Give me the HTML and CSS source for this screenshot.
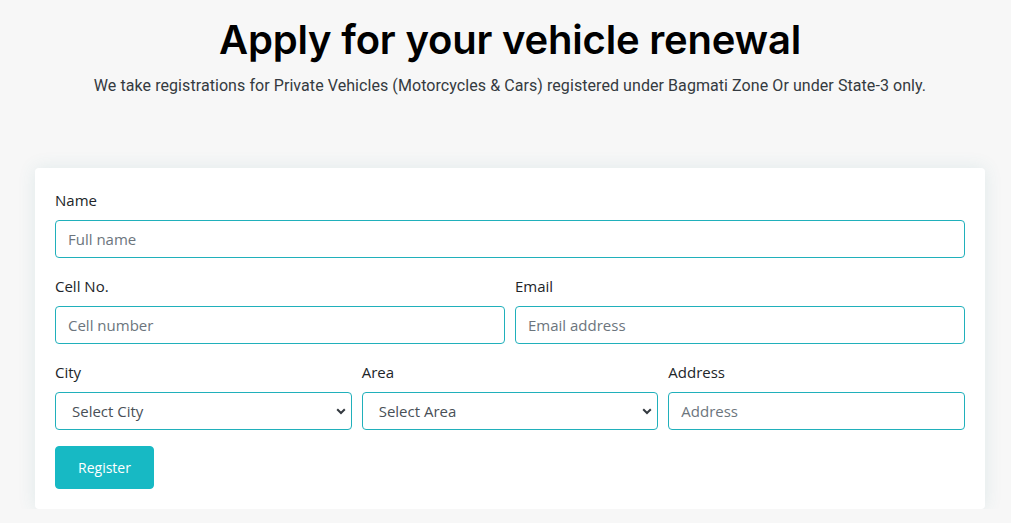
FILE: index.html
```html
<!DOCTYPE html>
<html lang="en">
<head>
<meta charset="utf-8">
<title>Apply for your vehicle renewal</title>
<link rel="stylesheet" href="styles.css">
</head>
<body>
<header class="hero">
  <h1 class="title">Apply for your vehicle renewal</h1>
  <p class="subtitle">We take registrations for Private Vehicles (Motorcycles &amp; Cars) registered under Bagmati Zone Or under State-3 only.</p>
</header>
<main class="card">
  <form class="form">
    <div class="row">
      <div class="field">
        <label class="label" for="name">Name</label>
        <input class="input" id="name" type="text" placeholder="Full name">
      </div>
    </div>
    <div class="row cols-2">
      <div class="field">
        <label class="label" for="cell">Cell No.</label>
        <input class="input" id="cell" type="text" placeholder="Cell number">
      </div>
      <div class="field">
        <label class="label" for="email">Email</label>
        <input class="input" id="email" type="text" placeholder="Email address">
      </div>
    </div>
    <div class="row cols-3">
      <div class="field">
        <label class="label" for="city">City</label>
        <div class="select-wrap">
          <select class="input select" id="city"><option>Select City</option></select>
          <svg class="chev" width="10" height="7" viewBox="0 0 10 7"><path d="M1.2 1.2 L5 5 L8.8 1.2" fill="none" stroke="#343a40" stroke-width="2"/></svg>
        </div>
      </div>
      <div class="field">
        <label class="label" for="area">Area</label>
        <div class="select-wrap">
          <select class="input select" id="area"><option>Select Area</option></select>
          <svg class="chev" width="10" height="7" viewBox="0 0 10 7"><path d="M1.2 1.2 L5 5 L8.8 1.2" fill="none" stroke="#343a40" stroke-width="2"/></svg>
        </div>
      </div>
      <div class="field">
        <label class="label" for="address">Address</label>
        <input class="input" id="address" type="text" placeholder="Address">
      </div>
    </div>
    <div class="actions">
      <button class="btn" type="button">Register</button>
    </div>
  </form>
</main>
</body>
</html>
```

FILE: styles.css
```css
* { box-sizing: border-box; }
html, body { margin: 0; padding: 0; }
body {
  background: #f7f7f7;
  font-family: "Open Sans", "Noto Sans", sans-serif;
  color: #212529;
  padding: 0 35px;
}
.hero {
  text-align: center;
  padding-top: 16px;
  padding-left: 9px;
  height: 168px;
}
.title {
  margin: 0;
  font-family: "Inter", "Lato", sans-serif;
  font-weight: 600;
  font-size: 40px;
  line-height: 48px;
  color: #000;
  letter-spacing: -0.2px;
}
.subtitle {
  margin: 10px 0 0;
  font-family: "Roboto", "Open Sans", sans-serif;
  font-size: 16px;
  line-height: 24px;
  color: #343a40;
  letter-spacing: 0.07px;
}
.card {
  background: #fff;
  border-radius: 4px;
  box-shadow: 0 0 18px rgba(60, 140, 150, 0.12);
  padding: 20px;
  width: 950px;
}
.form { display: flex; flex-direction: column; gap: 16px; }
.row { display: grid; grid-template-columns: 1fr; gap: 10px; }
.row.cols-2 { grid-template-columns: 1fr 1fr; }
.row.cols-3 { grid-template-columns: 1fr 1fr 1fr; }
.field { display: flex; flex-direction: column; }
.label {
  font-size: 15px;
  line-height: 24px;
  margin-bottom: 8px;
  color: #212529;
}
.input {
  height: 38px;
  width: 100%;
  border: 1px solid #20b0bb;
  border-radius: 4px;
  padding: 0 12px;
  font-family: "Open Sans", "Noto Sans", sans-serif;
  font-size: 15px;
  color: #495057;
  background: #fff;
  outline: none;
}
.input::placeholder { color: #6c757d; opacity: 1; }
.select-wrap { position: relative; }
.select {
  appearance: none;
  -webkit-appearance: none;
  padding-left: 16px;
  color: #495057;
}
.chev { position: absolute; right: 6px; top: 16px; pointer-events: none; }
.actions { display: flex; }
.btn {
  background: #17b9c4;
  color: #fff;
  border: 1px solid #17b9c4;
  border-radius: 4px;
  height: 43px;
  width: 99px;
  font-family: "Open Sans", "Noto Sans", sans-serif;
  font-size: 14px;
}
```
